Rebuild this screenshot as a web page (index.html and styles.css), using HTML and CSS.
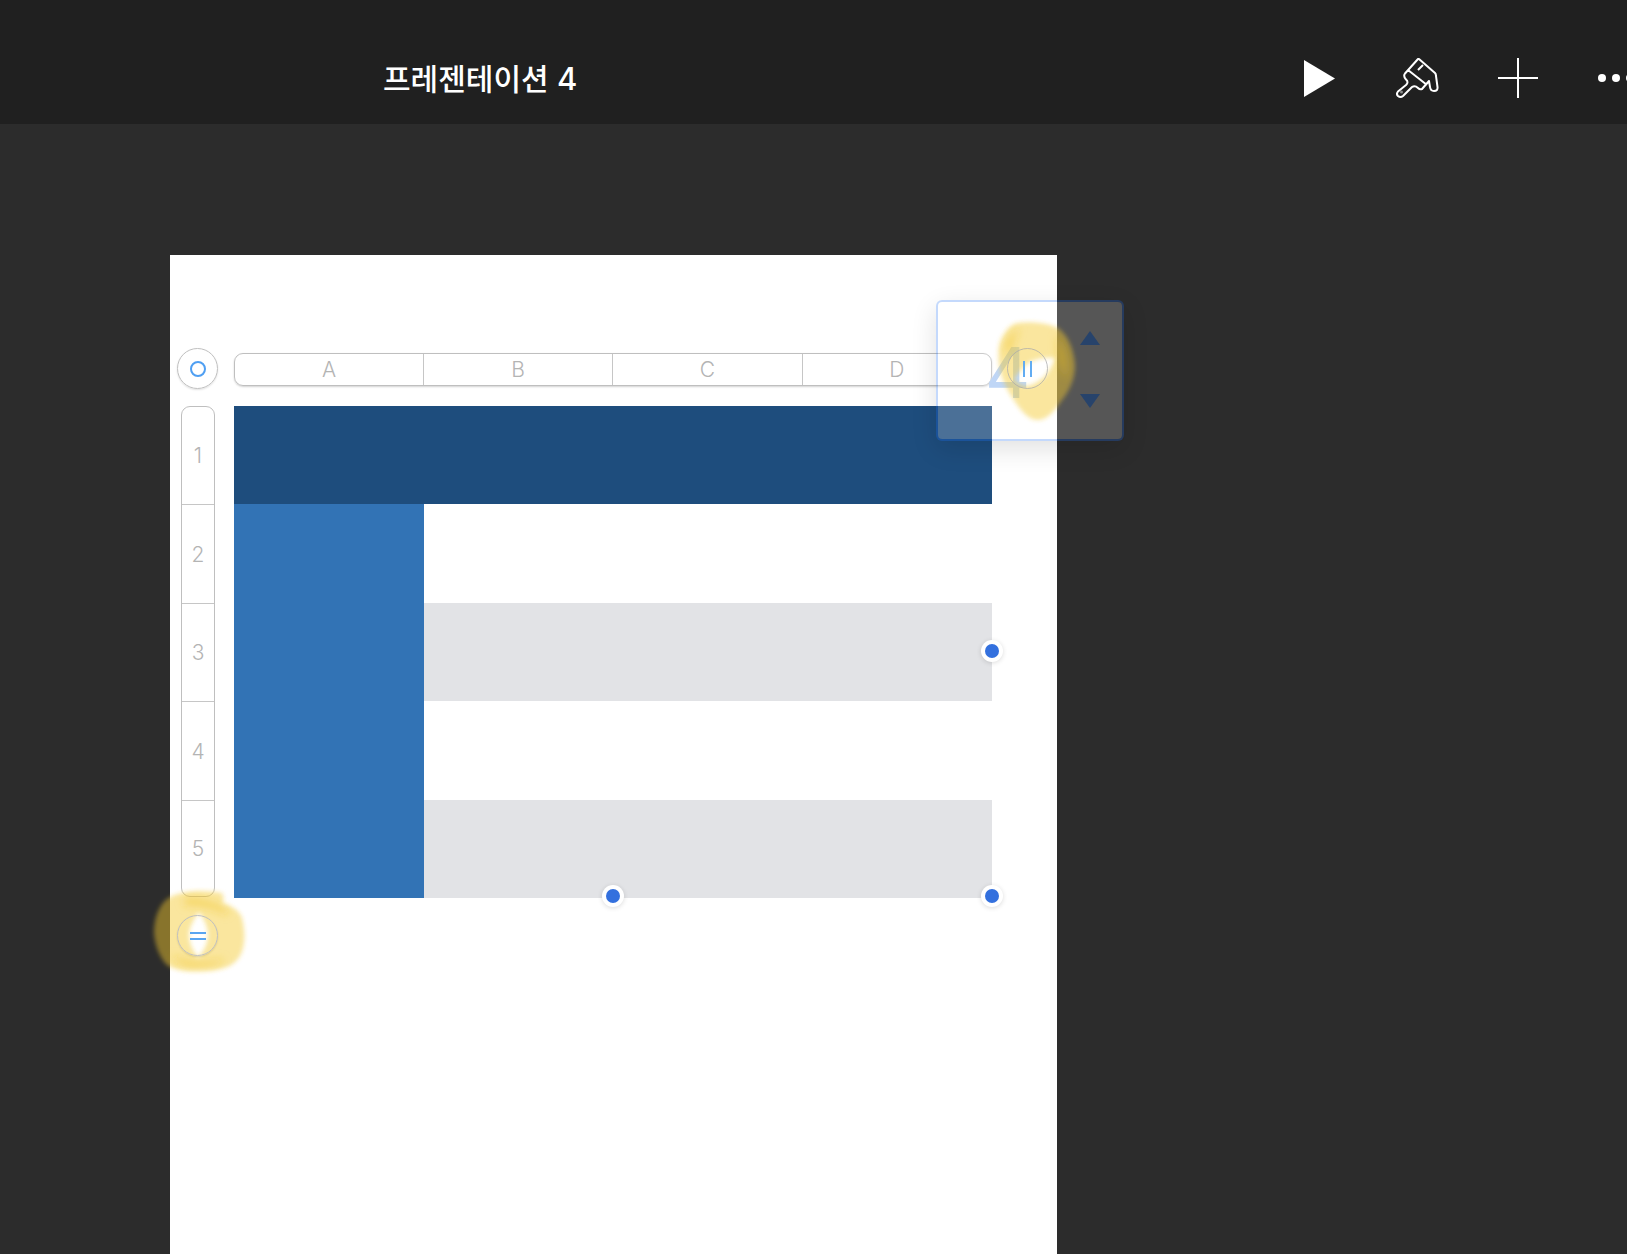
FILE: index.html
```html
<!DOCTYPE html>
<html lang="ko">
<head>
<meta charset="utf-8">
<title>프레젠테이션 4</title>
<link rel="stylesheet" href="styles.css">
</head>
<body>
<header class="topbar">
  <h1 class="title">프레젠테이션 <span class="num">4</span></h1>
  <div class="actions">
    <svg class="icon-play" viewBox="0 0 31 37"><path d="M0 0L31 18.5L0 37Z"/></svg>
    <svg class="icon-brush" viewBox="0 0 43 41"><path class="brush-line" d="M23 1L39 15Q40 16 40 18L41.5 29Q42 33 38 33Q34.5 33 34 29L33 23L26 31Q24 32 22 30Q19 27 16 29L7 38Q4.5 40 2 38Q0 36 2 33.5L10 27Q13 24 10 21.5Q7 18 9 15.5L22 1Q22.5 .5 23 1ZM12 12L31 27M22 12L27 7"/><circle class="brush-dot" cx="5.5" cy="34" r="1.5"/></svg>
    <svg class="icon-plus" viewBox="0 0 40 40"><path d="M0 20H40M20 0V40"/></svg>
    <div class="dots"><span></span><span></span><span></span></div>
  </div>
</header>
<main class="stage">
  <section class="slide">
    <div class="table-editor">
      <div class="corner-cell"><div class="round-btn"><span class="ring"></span></div></div>
      <div class="col-bar"><span>A</span><span>B</span><span>C</span><span>D</span></div>
      <div class="row-cell">
        <div class="row-bar"><span>1</span><span>2</span><span>3</span><span>4</span><span>5</span></div>
      </div>
      <div class="table">
        <div class="head"></div>
        <div class="side"></div>
        <div class="plain"></div>
        <div class="band"></div>
        <div class="plain"></div>
        <div class="band"></div>
        <span class="handle handle-right"></span>
        <span class="handle handle-bottom"></span>
        <span class="handle handle-corner"></span>
      </div>
      <div class="add-cell"><div class="round-btn"><span class="eq"></span></div></div>
    </div>
  </section>
</main>
<aside class="panel">
  <span class="ghost">4</span>
  <div class="arrows"><span class="arrow-up"></span><span class="arrow-down"></span></div>
</aside>
<svg class="marker" viewBox="0 0 1627 1254" width="1627" height="1254">
  <defs>
    <filter id="soft" x="-20%" y="-20%" width="140%" height="140%"><feGaussianBlur stdDeviation="2"/></filter>
    <filter id="softer" x="-30%" y="-30%" width="160%" height="160%"><feGaussianBlur stdDeviation="4"/></filter>
  </defs>
  <g filter="url(#soft)">
    <path class="ink" fill-rule="evenodd" d="M1018 323C1030 321 1048 323 1058 328C1068 335 1074 350 1075 365C1075 378 1070 390 1062 400C1055 410 1048 420 1038 420C1030 420 1024 414 1018 406C1010 395 1003 383 1000 370C997 355 998 343 1005 333C1008 328 1012 324 1018 323ZM1014 379C1020 371 1025 364 1032 361C1039 358 1048 357 1055 358C1053 364 1050 370 1046 375C1040 381 1033 385 1027 386C1022 386 1017 383 1014 379Z"/>
    <path class="ink" fill-rule="evenodd" d="M183 893C195 890 212 891 222 893C224 897 224 900 222 903C232 906 240 911 242 918C245 930 245 940 243 948C241 957 235 964 227 967C216 971 205 971 193 971C183 971 173 969 167 965C160 958 155 946 154 933C154 921 157 911 163 903C168 897 175 894 183 893ZM199 912C204 919 208 927 208 935C208 944 203 952 198 958C193 951 189 943 189 935C189 927 194 919 199 912Z"/>
  </g>
  <g filter="url(#softer)">
    <path class="ink-deep" d="M1056 335C1064 345 1068 360 1066 378C1062 372 1058 362 1056 335Z"/>
    <path class="ink-deep" d="M1004 345C1008 336 1014 330 1020 328C1016 336 1012 345 1010 356C1007 354 1005 350 1004 345Z"/>
    <path class="ink-deep" d="M184 898C195 896 210 900 222 906C228 909 230 913 226 915C212 908 196 905 184 906Z"/>
    <path class="ink-deep" d="M172 955C185 961 205 964 224 958C222 966 205 968 190 967C180 966 174 961 172 955Z"/>
  </g>
</svg>
<div class="pause-btn"><span></span><span></span></div>
</body>
</html>
```

FILE: styles.css
```css
html, body {
  margin: 0;
  padding: 0;
}

body {
  position: relative;
  width: 1627px;
  height: 1254px;
  overflow: hidden;
  background: #2c2c2c;
  font-family: "Inter", "Liberation Sans", sans-serif;
}

.topbar {
  display: flex;
  align-items: center;
  height: 124px;
  padding: 32px 0 0 383px;
  box-sizing: border-box;
  background: #202020;
  overflow: hidden;
}

.title {
  flex: 0 0 921px;
  margin: 0;
  color: #fff;
  font-family: "Noto Sans CJK KR", "Noto Sans", sans-serif;
  font-size: 30px;
  font-weight: 500;
  line-height: 40px;
  white-space: nowrap;
}

.num {
  font-family: "Inter", "Liberation Sans", sans-serif;
  font-size: 31px;
  font-weight: 500;
}

.actions {
  display: flex;
  align-items: center;
  flex: none;
  gap: 60px;
}

.icon-play {
  width: 31px;
  height: 37px;
  fill: #fff;
}

.icon-brush {
  width: 43px;
  height: 41px;
  margin-left: 1px;
}

.brush-line {
  fill: none;
  stroke: #fff;
  stroke-width: 2;
  stroke-linejoin: round;
}

.brush-dot {
  fill: #8a8a8a;
}

.icon-plus {
  width: 40px;
  height: 40px;
  margin-left: -1px;
}

.icon-plus path {
  fill: none;
  stroke: #fff;
  stroke-width: 2;
}

.dots {
  display: flex;
  gap: 6px;
}

.dots span {
  width: 8px;
  height: 8px;
  border-radius: 50%;
  background: #fff;
}

.stage {
  padding: 131px 0 0 170px;
}

.slide {
  width: 887px;
  height: 1000px;
  padding-top: 93px;
  box-sizing: border-box;
  background: #fff;
}

.table-editor {
  display: grid;
  grid-template-columns: 64px 758px;
  grid-template-rows: 41px 492px 41px;
  row-gap: 17px;
}

.corner-cell,
.add-cell {
  padding-left: 7px;
}

.round-btn {
  position: relative;
  z-index: 2;
  display: flex;
  align-items: center;
  justify-content: center;
  width: 41px;
  height: 41px;
  box-sizing: border-box;
  border: 1px solid #c0c0c0;
  border-radius: 50%;
  box-shadow: 0 1px 2px rgba(0, 0, 0, .12);
}

.ring {
  width: 16px;
  height: 16px;
  box-sizing: border-box;
  border: 2px solid #4f9ff2;
  border-radius: 50%;
}

.eq {
  width: 16px;
  height: 4px;
  border-top: 2px solid #5aa5f0;
  border-bottom: 2px solid #5aa5f0;
}

.col-bar {
  display: grid;
  grid-template-columns: 188px repeat(3, 1fr);
  height: 33px;
  margin-top: 5px;
  box-sizing: border-box;
  border: 1px solid #bfbfbf;
  border-radius: 9px;
  box-shadow: 0 1px 2px rgba(0, 0, 0, .18);
}

.col-bar span,
.row-bar span {
  display: flex;
  align-items: center;
  justify-content: center;
  color: #b4b4b4;
  font-size: 21px;
  font-weight: 300;
}

.col-bar span + span {
  border-left: 1px solid #c6c6c6;
}

.row-cell {
  padding-left: 11px;
}

.row-bar {
  display: grid;
  grid-template-rows: 97px 99px 98px 99px 1fr;
  width: 34px;
  height: 491px;
  box-sizing: border-box;
  border: 1px solid #bfbfbf;
  border-radius: 9px;
}

.row-bar span + span {
  border-top: 1px solid #c6c6c6;
}

.table {
  position: relative;
  display: grid;
  grid-template-columns: 190px 1fr;
  grid-template-rows: repeat(5, 1fr);
}

.head {
  grid-column: 1 / 3;
  background: #1e4d7d;
}

.side {
  grid-row: 2 / 6;
  background: #3273b5;
}

.plain {
  grid-column: 2;
  background: #fff;
}

.band {
  grid-column: 2;
  background: #e2e3e6;
}

.handle {
  position: absolute;
  width: 14px;
  height: 14px;
  margin: -7px 0 0 -7px;
  border-radius: 50%;
  background: #3370de;
  box-shadow: 0 0 0 4px #fff, 0 1px 5px 4px rgba(0, 0, 0, .14);
}

.handle-right {
  left: 758px;
  top: 245px;
}

.handle-bottom {
  left: 379px;
  top: 490px;
}

.handle-corner {
  left: 758px;
  top: 490px;
}

.panel {
  position: absolute;
  left: 936px;
  top: 300px;
  width: 188px;
  height: 141px;
  box-sizing: border-box;
  border: 2px solid rgba(20, 105, 245, .25);
  border-radius: 6px;
  background: rgba(255, 255, 255, .2);
  background-clip: padding-box;
  box-shadow: 0 8px 26px rgba(0, 0, 0, .12);
}

.ghost {
  position: absolute;
  left: 47px;
  top: 36px;
  color: #bfd6f6;
  font-family: "Inter", "Liberation Sans", sans-serif;
  font-size: 70px;
  font-weight: 400;
  line-height: 70px;
}

.arrows {
  position: absolute;
  right: 22px;
  top: 29px;
  display: flex;
  flex-direction: column;
  gap: 49px;
}

.arrow-up,
.arrow-down {
  width: 0;
  height: 0;
  border-left: 10px solid transparent;
  border-right: 10px solid transparent;
}

.arrow-up {
  border-bottom: 14px solid #27436b;
}

.arrow-down {
  border-top: 14px solid #27436b;
}

.marker {
  position: absolute;
  left: 0;
  top: 0;
  z-index: 1;
  pointer-events: none;
}

.ink {
  fill: rgba(245, 200, 45, .46);
}

.ink-deep {
  fill: rgba(240, 195, 40, .45);
}

.pause-btn {
  position: absolute;
  left: 1007px;
  top: 348px;
  z-index: 2;
  display: flex;
  align-items: center;
  justify-content: center;
  gap: 5px;
  width: 41px;
  height: 41px;
  box-sizing: border-box;
  border: 1px solid rgba(170, 170, 170, .75);
  border-radius: 50%;
}

.pause-btn span {
  width: 2px;
  height: 16px;
  background: #62acf2;
}
```
